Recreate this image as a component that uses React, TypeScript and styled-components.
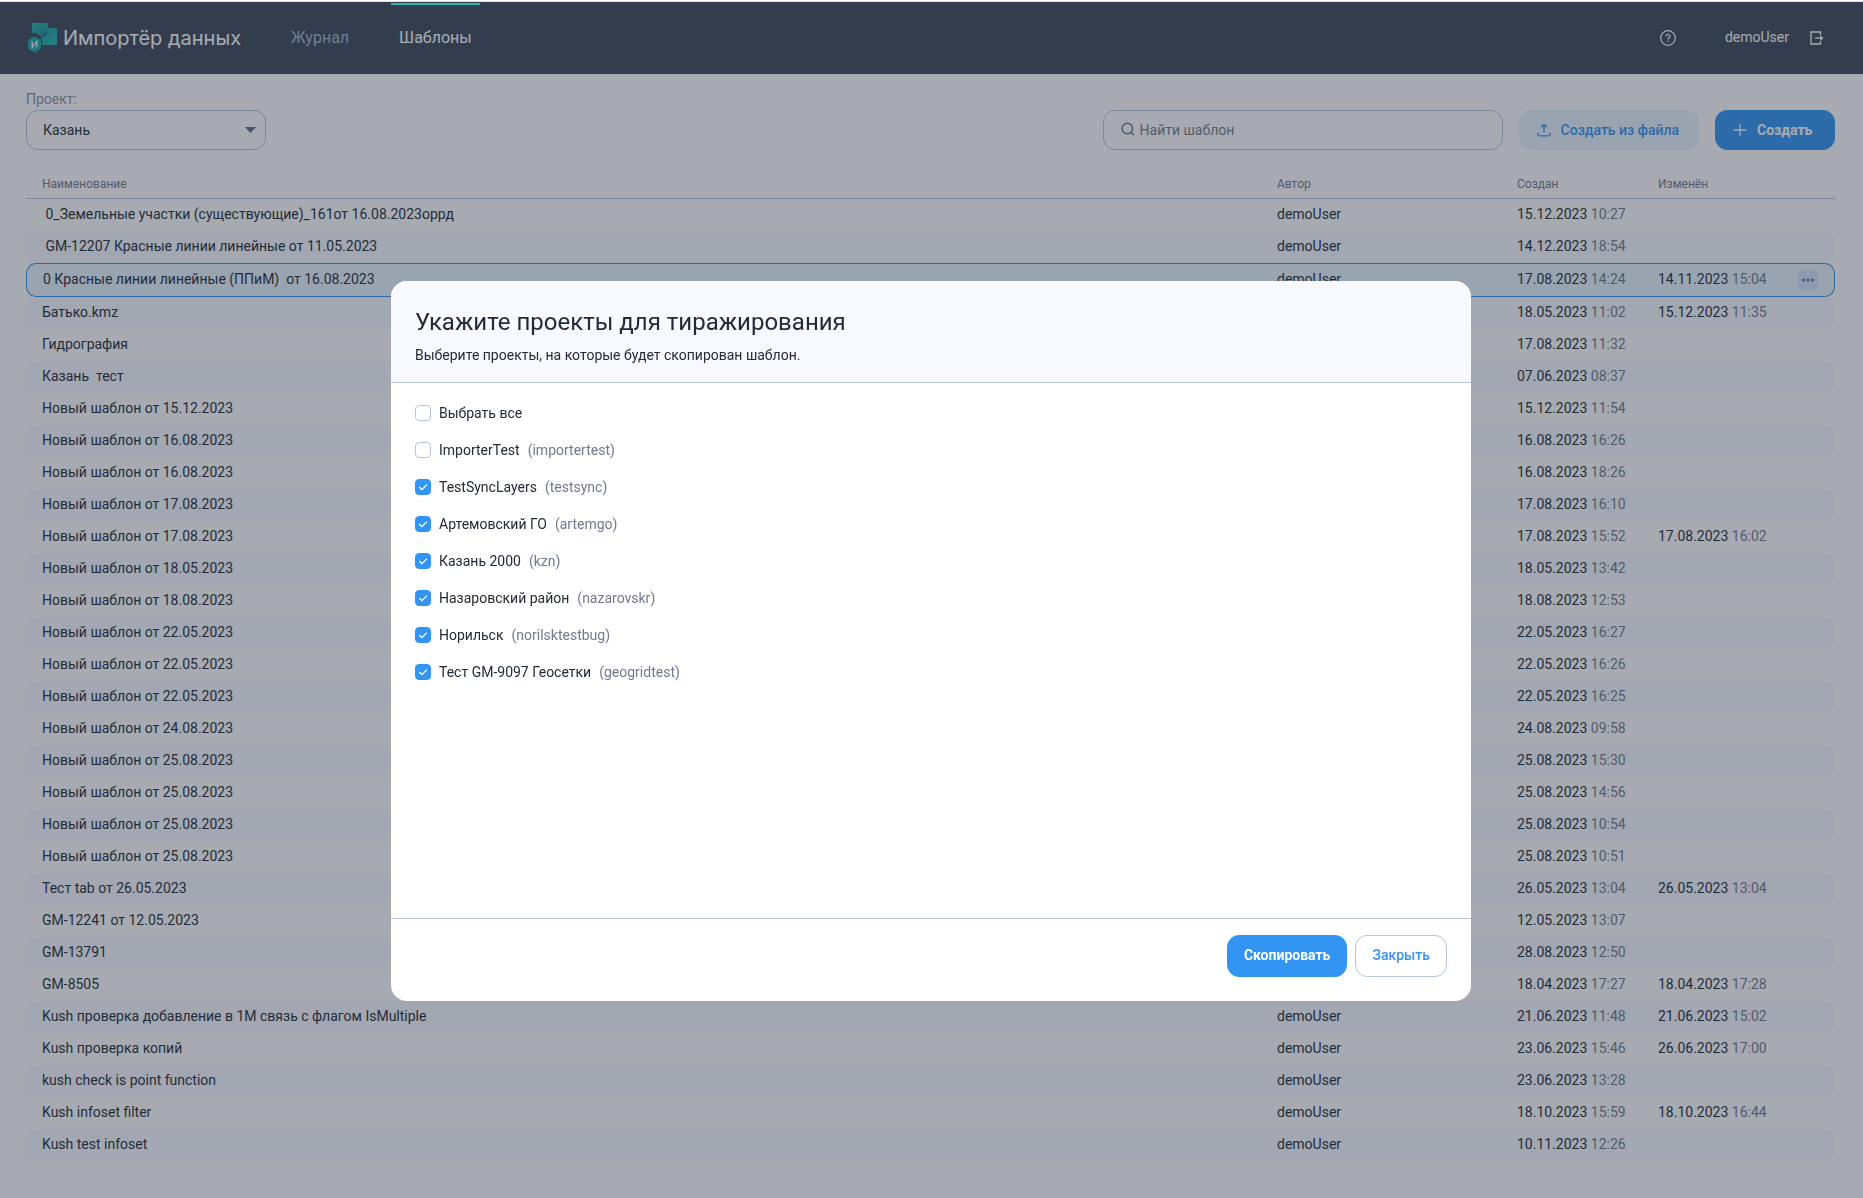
import React, { useState } from "react";
import styled, { createGlobalStyle, css } from "styled-components";

const color = {
  text: "#222b37",
  muted: "#6f7b8d",
  label: "#8490a3",
  border: "#b7c4dc",
  primary: "#3395f3",
  pale: "#e9f3ff",
  stripe: "#f8f9ff",
  header: "#3f495a",
  accent: "#26bbb4",
};

const GlobalStyle = createGlobalStyle`
  *, *::before, *::after { box-sizing: border-box; }
  body {
    margin: 0;
    background: #fff;
    color: ${color.text};
    font: 400 14px/20px Roboto, "Noto Sans", sans-serif;
  }
  button, input, select { font: inherit; color: inherit; margin: 0; }
`;

const Page = styled.div`
  padding-top: 1px;
`;

const Header = styled.header`
  display: flex;
  align-items: center;
  height: 73px;
  padding: 0 39px 0 27px;
  border-top: 1px solid #e2e6ea;
  background: ${color.header};
  background-clip: padding-box;
  color: #fff;
`;

const Brand = styled.a`
  display: flex;
  align-items: center;
  gap: 6px;
  color: inherit;
  text-decoration: none;
  font: 400 20px/24px Inter, "Noto Sans", sans-serif;
`;

const Nav = styled.nav`
  display: flex;
  align-self: stretch;
  gap: 34px;
  margin-left: 42px;
`;

const NavLink = styled.a<{ $active?: boolean }>`
  position: relative;
  display: flex;
  align-items: center;
  padding: 0 8px;
  font-size: 16px;
  color: ${(p) => (p.$active ? "#fff" : "#a5b4cc")};
  text-decoration: none;

  ${(p) =>
    p.$active &&
    css`
      &::before {
        content: "";
        position: absolute;
        z-index: 20;
        top: 1px;
        left: 0;
        right: 0;
        height: 2px;
        background: ${color.accent};
      }
    `}
`;

const Account = styled.div`
  display: flex;
  align-items: center;
  margin-left: auto;
`;

const UserName = styled.span`
  margin: 0 21px 2px 49px;
`;

const IconButton = styled.button`
  display: grid;
  place-items: center;
  padding: 0;
  border: 0;
  background: none;
  cursor: pointer;
`;

const Main = styled.main`
  padding: 15px 28px 36px 26px;
`;

const Toolbar = styled.div`
  display: flex;
  align-items: flex-end;
  gap: 16px;
`;

const Field = styled.div`
  display: flex;
  flex-direction: column;
  gap: 1px;
  width: 240px;
  margin-right: auto;
`;

const FieldLabel = styled.label`
  color: ${color.label};
`;

const Control = styled.div`
  position: relative;
  display: flex;

  svg {
    position: absolute;
    pointer-events: none;
  }
`;

const Select = styled.select`
  appearance: none;
  width: 100%;
  height: 40px;
  padding: 0 32px 0 16px;
  border: 1px solid ${color.border};
  border-radius: 12px;
  background: #fff;

  & + svg {
    right: 10px;
    top: 17px;
  }
`;

const SearchBox = styled(Control)`
  flex: 0 1 400px;

  svg {
    left: 18px;
    top: 12px;
    color: ${color.muted};
  }
`;

const SearchInput = styled.input`
  width: 100%;
  height: 40px;
  padding: 0 16px 0 36px;
  border: 1px solid ${color.border};
  border-radius: 12px;
  background: #fff;

  &::placeholder {
    color: ${color.muted};
    opacity: 1;
  }
`;

const buttonLook = {
  primary: css`
    border-color: ${color.primary};
    background: ${color.primary};
    color: #fff;
    font-weight: 700;
  `,
  pale: css`
    border-color: ${color.pale};
    background: ${color.pale};
    color: ${color.primary};
    font-weight: 500;
  `,
  outline: css`
    border-color: ${color.border};
    background: #fff;
    color: ${color.primary};
    font-weight: 500;
  `,
};

const Button = styled.button<{ $look: keyof typeof buttonLook }>`
  display: flex;
  align-items: center;
  height: 42px;
  padding: 0 16px 2px;
  border: 1px solid;
  border-radius: 12px;
  white-space: nowrap;
  cursor: pointer;
  ${(p) => buttonLook[p.$look]}
`;

const ToolbarButton = styled(Button)`
  gap: 10px;
  min-width: 120px;
  height: 40px;
  padding: 0 19px 0 17px;
`;

const Table = styled.table`
  width: 100%;
  margin-top: 20px;
  table-layout: fixed;
  border-collapse: separate;
  border-spacing: 0;
`;

const HeadCell = styled.th<{ $width?: number }>`
  width: ${(p) => (p.$width ? `${p.$width}px` : "auto")};
  height: 29px;
  padding: 0 16px;
  border-bottom: 1px solid ${color.border};
  color: ${color.muted};
  font-size: 12px;
  font-weight: 400;
  text-align: left;
`;

const Cell = styled.td`
  height: 32px;
  padding: 0 0 2px 16px;
  white-space: pre;

  &:first-child {
    border-radius: 10px 0 0 10px;
  }
  &:last-child {
    padding-bottom: 0;
    border-radius: 0 10px 10px 0;
  }
`;

const Row = styled.tr<{ $selected: boolean }>`
  &:nth-child(even) ${Cell} {
    background: ${color.stripe};
  }

  ${(p) =>
    p.$selected &&
    css`
      ${Cell} {
        height: 34px;
        border: solid ${color.primary};
        border-width: 1px 0;
        background: ${color.pale};
      }
      ${Cell}:first-child {
        border-left-width: 1px;
      }
      ${Cell}:last-child {
        border-right-width: 1px;
      }
    `}
`;

const Time = styled.span`
  color: ${color.muted};
`;

const MoreButton = styled(IconButton)`
  width: 20px;
  height: 20px;
  border-radius: 6px;
  background: #d3e1fb;
  color: #66748c;
`;

const Overlay = styled.div`
  position: fixed;
  z-index: 10;
  inset: 2px 0 0;
  display: flex;
  align-items: flex-start;
  justify-content: center;
  padding: 279px 1px 0 0;
  background: rgba(35, 45, 60, 0.4);
`;

const Dialog = styled.form`
  display: flex;
  flex-direction: column;
  width: 1080px;
  max-width: 100%;
  min-height: 720px;
  border-radius: 16px;
  background: #fff;
  overflow: hidden;
`;

const DialogHead = styled.header`
  padding: 25px 24px 17px;
  border-bottom: 1px solid ${color.border};
  background: ${color.stripe};
`;

const DialogTitle = styled.h2`
  margin: 0 0 7px;
  font-size: 24px;
  font-weight: 400;
  line-height: 32px;
`;

const DialogText = styled.p`
  margin: 0;
`;

const ProjectList = styled.ul`
  flex: 1;
  margin: 0;
  padding: 19px 24px;
  list-style: none;
`;

const ProjectItem = styled.li`
  display: flex;
  height: 37px;
`;

const CheckLabel = styled.label`
  display: flex;
  align-items: center;
  gap: 8px;
  height: 22px;
  cursor: pointer;
`;

const CheckMark = styled.span`
  position: relative;
  display: flex;

  svg {
    position: absolute;
    inset: 0;
    pointer-events: none;
  }
`;

const Checkbox = styled.input`
  appearance: none;
  width: 16px;
  height: 16px;
  border: 1px solid ${color.border};
  border-radius: 4px;
  background: #fff;

  &:checked {
    border-color: ${color.primary};
    background: ${color.primary};
  }
`;

const Code = styled.span`
  color: ${color.muted};
`;

const DialogFoot = styled.footer`
  display: flex;
  justify-content: flex-end;
  gap: 8px;
  padding: 16px 24px 24px;
  border-top: 1px solid ${color.border};
`;

type Template = [name: string, created: string, changed?: string];

const templates: Template[] = [
  [" 0_Земельные участки (существующие)_161от 16.08.2023оррд", "15.12.2023 10:27"],
  [" GM-12207 Красные линии линейные от 11.05.2023", "14.12.2023 18:54"],
  ["0 Красные линии линейные (ППиМ)  от 16.08.2023", "17.08.2023 14:24", "14.11.2023 15:04"],
  ["Батько.kmz", "18.05.2023 11:02", "15.12.2023 11:35"],
  ["Гидрография", "17.08.2023 11:32"],
  ["Казань  тест", "07.06.2023 08:37"],
  ["Новый шаблон от 15.12.2023", "15.12.2023 11:54"],
  ["Новый шаблон от 16.08.2023", "16.08.2023 16:26"],
  ["Новый шаблон от 16.08.2023", "16.08.2023 18:26"],
  ["Новый шаблон от 17.08.2023", "17.08.2023 16:10"],
  ["Новый шаблон от 17.08.2023", "17.08.2023 15:52", "17.08.2023 16:02"],
  ["Новый шаблон от 18.05.2023", "18.05.2023 13:42"],
  ["Новый шаблон от 18.08.2023", "18.08.2023 12:53"],
  ["Новый шаблон от 22.05.2023", "22.05.2023 16:27"],
  ["Новый шаблон от 22.05.2023", "22.05.2023 16:26"],
  ["Новый шаблон от 22.05.2023", "22.05.2023 16:25"],
  ["Новый шаблон от 24.08.2023", "24.08.2023 09:58"],
  ["Новый шаблон от 25.08.2023", "25.08.2023 15:30"],
  ["Новый шаблон от 25.08.2023", "25.08.2023 14:56"],
  ["Новый шаблон от 25.08.2023", "25.08.2023 10:54"],
  ["Новый шаблон от 25.08.2023", "25.08.2023 10:51"],
  ["Тест tab от 26.05.2023", "26.05.2023 13:04", "26.05.2023 13:04"],
  ["GM-12241 от 12.05.2023", "12.05.2023 13:07"],
  ["GM-13791", "28.08.2023 12:50"],
  ["GM-8505", "18.04.2023 17:27", "18.04.2023 17:28"],
  ["Kush проверка добавление в 1М связь с флагом IsMultiple", "21.06.2023 11:48", "21.06.2023 15:02"],
  ["Kush проверка копий", "23.06.2023 15:46", "26.06.2023 17:00"],
  ["kush check is point function", "23.06.2023 13:28"],
  ["Kush infoset filter", "18.10.2023 15:59", "18.10.2023 16:44"],
  ["Kush test infoset", "10.11.2023 12:26"],
];

const selectedIndex = 2;

const projects = [
  { name: "ImporterTest", code: "importertest", on: false },
  { name: "TestSyncLayers", code: "testsync", on: true },
  { name: "Артемовский ГО", code: "artemgo", on: true },
  { name: "Казань 2000", code: "kzn", on: true },
  { name: "Назаровский район", code: "nazarovskr", on: true },
  { name: "Норильск", code: "norilsktestbug", on: true },
  { name: "Тест GM-9097 Геосетки", code: "geogridtest", on: true },
];

const Logo = () => (
  <svg width="30" height="30" viewBox="0 0 30 30" aria-hidden="true">
    <defs>
      <linearGradient id="tileBack" x1="0" y1="0" x2="1" y2="1">
        <stop offset="0" stopColor="#29b3b3" />
        <stop offset="1" stopColor="#1b8f98" />
      </linearGradient>
      <linearGradient id="tileFront" x1="0" y1="0" x2="1" y2="1">
        <stop offset="0" stopColor="#1c98a0" />
        <stop offset="1" stopColor="#2abdb9" />
      </linearGradient>
    </defs>
    <path d="M21 5h9v17H13v-6l4-3 4-3z" fill="url(#tileFront)" />
    <path d="M5 0h16v10h-3l-4 4-5-4H5z" fill="url(#tileBack)" />
    <path d="M7.500 13l7 4v9l-7 4-7-4v-9z" fill="#1fa7ac" stroke="#3f495a" />
    <path d="M5.200 18.500v6l4.600-6v6" fill="none" stroke="#fff" strokeWidth="1.200" />
  </svg>
);

const HelpIcon = () => (
  <svg width="16" height="16" viewBox="0 0 16 16" fill="none" stroke="#fff" aria-hidden="true">
    <circle cx="8" cy="8" r="7.300" strokeWidth="1.200" />
    <path d="M6 6.600C6 5.300 6.900 4.500 8 4.500s2 .8 2 1.900c0 1.400-2 1.500-2 3.100" strokeWidth="1.200" />
    <path d="M8 10.700v1.300" strokeWidth="1.300" />
  </svg>
);

const ExitIcon = () => (
  <svg width="14" height="14" viewBox="0 0 14 14" fill="none" stroke="#fff" strokeWidth="1.300" aria-hidden="true">
    <path d="M10.500 4V1H1v12h9.500v-3" />
    <path d="M5 7h7" />
    <path d="M10.300 4.300L13.500 7l-3.200 2.700z" fill="#fff" stroke="none" />
  </svg>
);

const SearchIcon = () => (
  <svg width="14" height="14" viewBox="0 0 14 14" fill="none" stroke="currentColor" strokeWidth="1.500" aria-hidden="true">
    <circle cx="6.300" cy="6.500" r="5.200" />
    <path d="M10 10.300l3 3" />
  </svg>
);

const UploadIcon = () => (
  <svg width="14" height="14" viewBox="0 0 14 14" fill="none" stroke="currentColor" strokeWidth="1.300" aria-hidden="true">
    <path d="M7 9.500V2M4.300 4.300L7 1.600l2.700 2.700" />
    <path d="M1 9.500v2.300c0 .7.400 1.100 1.100 1.100h9.800c.7 0 1.100-.4 1.100-1.100V9.500" />
  </svg>
);

const PlusIcon = () => (
  <svg width="14" height="14" viewBox="0 0 14 14" stroke="currentColor" strokeWidth="1.300" aria-hidden="true">
    <path d="M7 1v12M1 7h12" />
  </svg>
);

const DotsIcon = () => (
  <svg width="12" height="4" viewBox="0 0 12 4" fill="currentColor" aria-hidden="true">
    <circle cx="1.600" cy="2" r="1.500" />
    <circle cx="6" cy="2" r="1.500" />
    <circle cx="10.400" cy="2" r="1.500" />
  </svg>
);

const TickIcon = () => (
  <svg width="16" height="16" viewBox="0 0 16 16" fill="none" stroke="#fff" strokeWidth="1.300" aria-hidden="true">
    <path d="M4.300 8l2.600 2.600 5-5" />
  </svg>
);

const Stamp = ({ value }: { value?: string }) => {
  if (!value) return null;
  const [date, time] = value.split(" ");
  return (
    <>
      {date} <Time>{time}</Time>
    </>
  );
};

type CheckProps = { label: string; code?: string; checked: boolean; onToggle: () => void };

const Check = ({ label, code, checked, onToggle }: CheckProps) => (
  <ProjectItem>
    <CheckLabel>
      <CheckMark>
        <Checkbox type="checkbox" checked={checked} onChange={onToggle} />
        {checked && <TickIcon />}
      </CheckMark>
      {label}
      {code && <Code>({code})</Code>}
    </CheckLabel>
  </ProjectItem>
);

export default function App() {
  const [marks, setMarks] = useState(projects.map((p) => p.on));
  const [open, setOpen] = useState(true);
  const all = marks.every(Boolean);

  return (
    <>
      <GlobalStyle />
      <Page>
        <Header>
          <Brand href="#">
            <Logo />
            Импортёр данных
          </Brand>
          <Nav>
            <NavLink href="#journal">Журнал</NavLink>
            <NavLink href="#templates" $active aria-current="page">
              Шаблоны
            </NavLink>
          </Nav>
          <Account>
            <IconButton type="button" aria-label="Справка">
              <HelpIcon />
            </IconButton>
            <UserName>demoUser</UserName>
            <IconButton type="button" aria-label="Выйти">
              <ExitIcon />
            </IconButton>
          </Account>
        </Header>

        <Main>
          <Toolbar>
            <Field>
              <FieldLabel htmlFor="project">Проект:</FieldLabel>
              <Control>
                <Select id="project" defaultValue="Казань">
                  <option>Казань</option>
                </Select>
                <svg width="11" height="6" viewBox="0 0 11 6" aria-hidden="true">
                  <path d="M0 0h11L5.500 6z" fill="#5f6f88" />
                </svg>
              </Control>
            </Field>
            <SearchBox>
              <SearchInput type="search" placeholder="Найти шаблон" aria-label="Найти шаблон" />
              <SearchIcon />
            </SearchBox>
            <ToolbarButton type="button" $look="pale">
              <UploadIcon />
              Создать из файла
            </ToolbarButton>
            <ToolbarButton type="button" $look="primary">
              <PlusIcon />
              Создать
            </ToolbarButton>
          </Toolbar>

          <Table>
            <thead>
              <tr>
                <HeadCell>Наименование</HeadCell>
                <HeadCell $width={240}>Автор</HeadCell>
                <HeadCell $width={141}>Создан</HeadCell>
                <HeadCell $width={140}>Изменён</HeadCell>
                <HeadCell $width={53} aria-label="Действия" />
              </tr>
            </thead>
            <tbody>
              {templates.map(([name, created, changed], i) => (
                <Row key={i} $selected={i === selectedIndex}>
                  <Cell>{name}</Cell>
                  <Cell>demoUser</Cell>
                  <Cell>
                    <Stamp value={created} />
                  </Cell>
                  <Cell>
                    <Stamp value={changed} />
                  </Cell>
                  <Cell>
                    {i === selectedIndex && (
                      <MoreButton type="button" aria-label="Ещё">
                        <DotsIcon />
                      </MoreButton>
                    )}
                  </Cell>
                </Row>
              ))}
            </tbody>
          </Table>
        </Main>
      </Page>

      {open && (
        <Overlay>
          <Dialog role="dialog" aria-modal="true" aria-labelledby="dialog-title" onSubmit={(e) => e.preventDefault()}>
            <DialogHead>
              <DialogTitle id="dialog-title">Укажите проекты для тиражирования</DialogTitle>
              <DialogText>Выберите проекты, на которые будет скопирован шаблон.</DialogText>
            </DialogHead>
            <ProjectList>
              <Check label="Выбрать все" checked={all} onToggle={() => setMarks(marks.map(() => !all))} />
              {projects.map((p, i) => (
                <Check
                  key={p.code}
                  label={p.name}
                  code={p.code}
                  checked={marks[i]}
                  onToggle={() => setMarks(marks.map((m, j) => (j === i ? !m : m)))}
                />
              ))}
            </ProjectList>
            <DialogFoot>
              <Button type="submit" $look="primary">
                Скопировать
              </Button>
              <Button type="button" $look="outline" onClick={() => setOpen(false)}>
                Закрыть
              </Button>
            </DialogFoot>
          </Dialog>
        </Overlay>
      )}
    </>
  );
}
